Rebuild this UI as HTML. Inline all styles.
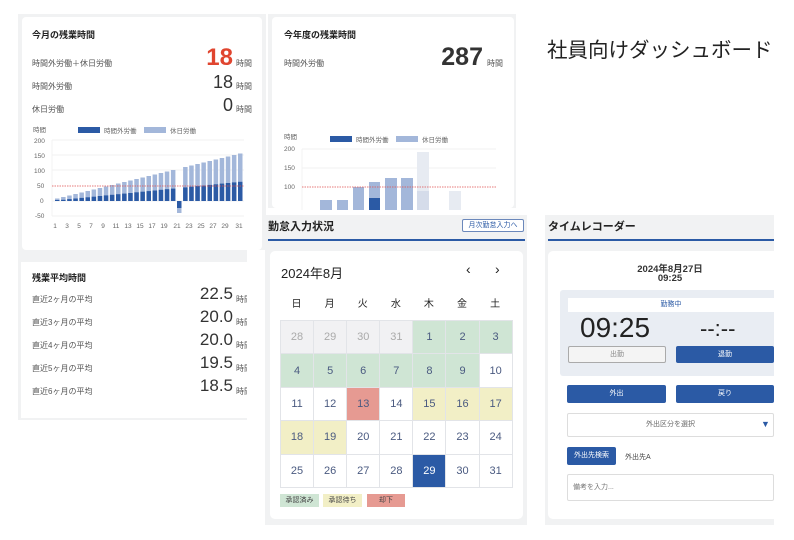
<!DOCTYPE html>
<html><head><meta charset="utf-8"><style>
*{margin:0;padding:0;box-sizing:border-box}
body{width:794px;height:540px;background:#fff;position:relative;overflow:hidden;font-family:"Liberation Sans","Noto Sans CJK JP",sans-serif;color:#333}
.a{position:absolute}
.s{font-size:8px;color:#555;white-space:nowrap}
.n{position:absolute;right:561px;color:#333;text-align:right;white-space:nowrap}
.card{position:absolute;background:#fff}
.g{background:#f1f2f3}
.cal td{width:33.1px;height:33.4px;text-align:center;font-size:11px;color:#4a5a80;border:1px solid #e2e4e8}
.cal{border-collapse:collapse;position:absolute;left:280px;top:320px}
.btn{position:absolute;background:#2b5aa5;color:#fff;font-size:7px;text-align:center;border-radius:2px}
</style></head><body>
<div class="a g" style="left:18px;top:14px;width:248px;height:240px"></div>
<div class="a g" style="left:268px;top:14px;width:248px;height:194px"></div>
<div class="a g" style="left:18px;top:252px;width:232px;height:168px"></div>
<div class="card" style="left:22px;top:17px;width:240px;height:233px;border-radius:4px"></div>
<div class="card" style="left:272px;top:17px;width:242px;height:191px;border-radius:4px"></div>
<div class="card" style="left:21px;top:262px;width:226px;height:156px"></div>

<div class="a" style="left:32px;top:28px;font-size:9px;color:#222;font-weight:bold">今月の残業時間</div>
<div class="a s" style="left:32px;top:58px">時間外労働＋休日労働</div>
<div class="n" style="top:44px;font-size:24px;color:#e0452f;font-weight:bold">18</div>
<div class="a s" style="left:236px;top:58px">時間</div>
<div class="a s" style="left:32px;top:81px">時間外労働</div>
<div class="n" style="top:72px;font-size:18px">18</div>
<div class="a s" style="left:236px;top:81px">時間</div>
<div class="a s" style="left:32px;top:104px">休日労働</div>
<div class="n" style="top:95px;font-size:18px">0</div>
<div class="a s" style="left:236px;top:104px">時間</div>

<svg class="a" style="left:0;top:0" width="270" height="250">
<g font-size="6.5" fill="#666" font-family="Liberation Sans, Noto Sans CJK JP, sans-serif">
<text x="33" y="132">時間</text>
<text x="34" y="143">200</text><text x="34" y="158">150</text><text x="34" y="173">100</text><text x="37" y="188">50</text><text x="40" y="203">0</text><text x="35" y="218">-50</text>
</g>
<rect x="78" y="127" width="22" height="6" fill="#2b5aa5"/><text x="104" y="133" font-size="6.5" fill="#666">時間外労働</text>
<rect x="144" y="127" width="22" height="6" fill="#a3b7da"/><text x="170" y="133" font-size="6.5" fill="#666">休日労働</text>
<g stroke="#eee" stroke-width="0.7"><line x1="52" y1="140" x2="244" y2="140"/><line x1="52" y1="155" x2="244" y2="155"/><line x1="52" y1="170" x2="244" y2="170"/><line x1="52" y1="201" x2="244" y2="201"/><line x1="52" y1="216" x2="244" y2="216"/><line x1="52" y1="140" x2="52" y2="216"/></g>
<g fill="#a3b7da">
<rect x="55" y="198.5" width="4.5" height="2.5"/><rect x="61.1" y="197" width="4.5" height="4"/><rect x="67.2" y="195.5" width="4.5" height="5.5"/><rect x="73.3" y="194" width="4.5" height="7"/><rect x="79.4" y="192.5" width="4.5" height="8.5"/><rect x="85.5" y="191" width="4.5" height="10"/><rect x="91.6" y="189.5" width="4.5" height="11.5"/><rect x="97.7" y="188" width="4.5" height="13"/><rect x="103.8" y="186.5" width="4.5" height="14.5"/><rect x="109.9" y="185" width="4.5" height="16"/><rect x="116" y="183.5" width="4.5" height="17.5"/><rect x="122.1" y="182" width="4.5" height="19"/><rect x="128.2" y="180.5" width="4.5" height="20.5"/><rect x="134.3" y="179" width="4.5" height="22"/><rect x="140.4" y="177.5" width="4.5" height="23.5"/><rect x="146.5" y="176" width="4.5" height="25"/><rect x="152.6" y="174.5" width="4.5" height="26.5"/><rect x="158.7" y="173" width="4.5" height="28"/><rect x="164.8" y="171.5" width="4.5" height="29.5"/><rect x="170.9" y="170" width="4.5" height="31"/>
<rect x="177" y="208" width="4.5" height="5"/>
<rect x="183.1" y="167" width="4.5" height="34"/><rect x="189.2" y="165.5" width="4.5" height="35.5"/><rect x="195.3" y="164" width="4.5" height="37"/><rect x="201.4" y="162.5" width="4.5" height="38.5"/><rect x="207.5" y="161" width="4.5" height="40"/><rect x="213.6" y="159.5" width="4.5" height="41.5"/><rect x="219.7" y="158" width="4.5" height="43"/><rect x="225.8" y="156.5" width="4.5" height="44.5"/><rect x="231.9" y="155" width="4.5" height="46"/><rect x="238" y="153.5" width="4.5" height="47.5"/>
</g>
<g fill="#2b5aa5">
<rect x="55" y="200" width="4.5" height="1"/><rect x="61.1" y="199.8" width="4.5" height="1.2"/><rect x="67.2" y="199.1" width="4.5" height="1.9"/><rect x="73.3" y="198.5" width="4.5" height="2.5"/><rect x="79.4" y="197.9" width="4.5" height="3.1"/><rect x="85.5" y="197.3" width="4.5" height="3.7"/><rect x="91.6" y="196.7" width="4.5" height="4.3"/><rect x="97.7" y="196" width="4.5" height="5"/><rect x="103.8" y="195.4" width="4.5" height="5.6"/><rect x="109.9" y="194.8" width="4.5" height="6.2"/><rect x="116" y="194.2" width="4.5" height="6.8"/><rect x="122.1" y="193.6" width="4.5" height="7.4"/><rect x="128.2" y="193" width="4.5" height="8"/><rect x="134.3" y="192.3" width="4.5" height="8.7"/><rect x="140.4" y="191.7" width="4.5" height="9.3"/><rect x="146.5" y="191.1" width="4.5" height="9.9"/><rect x="152.6" y="190.5" width="4.5" height="10.5"/><rect x="158.7" y="189.8" width="4.5" height="11.2"/><rect x="164.8" y="189.2" width="4.5" height="11.8"/><rect x="170.9" y="188.6" width="4.5" height="12.4"/>
<rect x="177" y="201" width="4.5" height="7"/>
<rect x="183.1" y="187.4" width="4.5" height="13.6"/><rect x="189.2" y="186.7" width="4.5" height="14.3"/><rect x="195.3" y="186.1" width="4.5" height="14.9"/><rect x="201.4" y="185.5" width="4.5" height="15.5"/><rect x="207.5" y="184.9" width="4.5" height="16.1"/><rect x="213.6" y="184.3" width="4.5" height="16.7"/><rect x="219.7" y="183.6" width="4.5" height="17.4"/><rect x="225.8" y="183" width="4.5" height="18"/><rect x="231.9" y="182.4" width="4.5" height="18.6"/><rect x="238" y="181.8" width="4.5" height="19.2"/>
</g>
<line x1="52" y1="186" x2="244" y2="186" stroke="#e05050" stroke-width="0.7" stroke-dasharray="1.5,1"/>
<g font-size="6.5" fill="#666" text-anchor="middle">
<text x="55" y="228">1</text><text x="67" y="228">3</text><text x="79" y="228">5</text><text x="91" y="228">7</text><text x="103" y="228">9</text><text x="116" y="228">11</text><text x="128" y="228">13</text><text x="140" y="228">15</text><text x="152" y="228">17</text><text x="164" y="228">19</text><text x="177" y="228">21</text><text x="189" y="228">23</text><text x="201" y="228">25</text><text x="213" y="228">27</text><text x="225" y="228">29</text><text x="239" y="228">31</text>
</g>
</svg>

<div class="a" style="left:284px;top:28px;font-size:9px;color:#222;font-weight:bold">今年度の残業時間</div>
<div class="a s" style="left:284px;top:58px">時間外労働</div>
<div class="a" style="right:311px;top:43px;font-size:25px;color:#333;font-weight:bold">287</div>
<div class="a s" style="left:487px;top:58px">時間</div>
<svg class="a" style="left:260px;top:0" width="260" height="210">
<g font-size="6.5" fill="#666"><text x="24" y="139">時間</text><text x="24" y="151">200</text><text x="24" y="170">150</text><text x="24" y="189">100</text></g>
<rect x="70" y="136" width="22" height="6" fill="#2b5aa5"/><text x="96" y="142" font-size="6.5" fill="#666">時間外労働</text>
<rect x="136" y="136" width="22" height="6" fill="#a3b7da"/><text x="162" y="142" font-size="6.5" fill="#666">休日労働</text>
<g stroke="#eee" stroke-width="0.7"><line x1="42" y1="149" x2="236" y2="149"/><line x1="42" y1="168" x2="236" y2="168"/><line x1="42" y1="149" x2="42" y2="210"/></g>
<g fill="#a3b7da"><rect x="60" y="200" width="12" height="10"/><rect x="77" y="200" width="11" height="10"/><rect x="93" y="187" width="11" height="23"/><rect x="109" y="182" width="11" height="28"/><rect x="125" y="178" width="12" height="32"/><rect x="141" y="178" width="12" height="32"/></g>
<rect x="109" y="198" width="11" height="12" fill="#2b5aa5"/>
<rect x="157" y="152" width="12" height="58" fill="#e7ebf2"/><rect x="157" y="191" width="12" height="19" fill="#d5dcea"/>
<rect x="189" y="191" width="12" height="19" fill="#e7ebf2"/>
<line x1="42" y1="187" x2="236" y2="187" stroke="#e05050" stroke-width="0.7" stroke-dasharray="1.5,1"/>
</svg>

<div class="a" style="left:32px;top:271px;font-size:9px;color:#222;font-weight:bold">残業平均時間</div>
<div class="a s" style="left:32px;top:294px">直近2ヶ月の平均</div><div class="n" style="top:284px;font-size:17px">22.5</div><div class="a s" style="left:236px;top:294px">時間</div>
<div class="a s" style="left:32px;top:317px">直近3ヶ月の平均</div><div class="n" style="top:307px;font-size:17px">20.0</div><div class="a s" style="left:236px;top:317px">時間</div>
<div class="a s" style="left:32px;top:340px">直近4ヶ月の平均</div><div class="n" style="top:330px;font-size:17px">20.0</div><div class="a s" style="left:236px;top:340px">時間</div>
<div class="a s" style="left:32px;top:363px">直近5ヶ月の平均</div><div class="n" style="top:353px;font-size:17px">19.5</div><div class="a s" style="left:236px;top:363px">時間</div>
<div class="a s" style="left:32px;top:386px">直近6ヶ月の平均</div><div class="n" style="top:376px;font-size:17px">18.5</div><div class="a s" style="left:236px;top:386px">時間</div>
<div class="a" style="left:247px;top:250px;width:22px;height:175px;background:#fff"></div>

<div class="a" style="left:547px;top:33px;font-size:20.5px;color:#222;white-space:nowrap">社員向けダッシュボード</div>

<div class="a g" style="left:265px;top:215px;width:262px;height:310px"></div>
<div class="a" style="left:268px;top:218px;font-size:11px;font-weight:bold;color:#222">勤怠入力状況</div>
<div class="a" style="left:462px;top:219px;width:62px;height:13px;border:1px solid #6b88bb;border-radius:2px;background:#fff;font-size:7px;color:#2b5aa5;text-align:center;line-height:11px">月次勤怠入力へ</div>
<div class="a" style="left:268px;top:239px;width:257px;height:2px;background:#2b5aa5"></div>
<div class="card" style="left:270px;top:251px;width:253px;height:268px;border-radius:5px"></div>
<div class="a" style="left:281px;top:263px;font-size:13px;color:#222">2024年8月</div>
<div class="a" style="left:466px;top:261px;font-size:14px;color:#222">‹</div>
<div class="a" style="left:495px;top:261px;font-size:14px;color:#222">›</div>
<div class="a" style="left:280px;top:295px;width:232px;display:flex;font-size:10px;color:#222">
<span style="width:33.1px;text-align:center">日</span><span style="width:33.1px;text-align:center">月</span><span style="width:33.1px;text-align:center">火</span><span style="width:33.1px;text-align:center">水</span><span style="width:33.1px;text-align:center">木</span><span style="width:33.1px;text-align:center">金</span><span style="width:33.1px;text-align:center">土</span></div>
<table class="cal">
<tr><td style="background:#f1f1f3;color:#aaa">28</td><td style="background:#f1f1f3;color:#aaa">29</td><td style="background:#f1f1f3;color:#aaa">30</td><td style="background:#f1f1f3;color:#aaa">31</td><td style="background:#cfe5d4">1</td><td style="background:#cfe5d4">2</td><td style="background:#cfe5d4">3</td></tr>
<tr><td style="background:#cfe5d4">4</td><td style="background:#cfe5d4">5</td><td style="background:#cfe5d4">6</td><td style="background:#cfe5d4">7</td><td style="background:#cfe5d4">8</td><td style="background:#cfe5d4">9</td><td>10</td></tr>
<tr><td>11</td><td>12</td><td style="background:#e69a92">13</td><td>14</td><td style="background:#f2efc6">15</td><td style="background:#f2efc6">16</td><td style="background:#f2efc6">17</td></tr>
<tr><td style="background:#f2efc6">18</td><td style="background:#f2efc6">19</td><td>20</td><td>21</td><td>22</td><td>23</td><td>24</td></tr>
<tr><td>25</td><td>26</td><td>27</td><td>28</td><td style="background:#2b5aa5;color:#fff">29</td><td>30</td><td>31</td></tr>
</table>
<div class="a" style="left:280px;top:494px;width:39px;height:13px;background:#cfe5d4;font-size:7px;color:#444;text-align:center;line-height:13px">承認済み</div>
<div class="a" style="left:323px;top:494px;width:39px;height:13px;background:#f2efc6;font-size:7px;color:#444;text-align:center;line-height:13px">承認待ち</div>
<div class="a" style="left:367px;top:494px;width:38px;height:13px;background:#e69a92;font-size:7px;color:#444;text-align:center;line-height:13px">却下</div>

<div class="a g" style="left:545px;top:215px;width:229px;height:310px"></div>
<div class="a" style="left:548px;top:218px;font-size:11px;font-weight:bold;color:#222">タイムレコーダー</div>
<div class="a" style="left:548px;top:239px;width:226px;height:2px;background:#2b5aa5"></div>
<div class="card" style="left:548px;top:251px;width:226px;height:268px;border-radius:5px 0 0 5px"></div>
<div class="a" style="left:600px;top:265px;width:140px;text-align:center;font-size:9.5px;font-weight:bold;color:#333;line-height:9px">2024年8月27日<br>09:25</div>
<div class="a" style="left:560px;top:290px;width:214px;height:86px;background:#e9edf3;border-radius:3px 0 0 3px"></div>
<div class="a" style="left:568px;top:298px;width:206px;height:14px;background:#fff;font-size:7px;color:#2b5aa5;text-align:center;line-height:14px">勤務中</div>
<div class="a" style="left:580px;top:312px;font-size:28px;color:#222">09:25</div>
<div class="a" style="left:700px;top:316px;font-size:22px;color:#222">--:--</div>
<div class="a" style="left:568px;top:346px;width:98px;height:17px;border:1px solid #aaa;border-radius:2px;background:#f4f4f4;font-size:7px;color:#888;text-align:center;line-height:15px">出勤</div>
<div class="btn" style="left:676px;top:346px;width:98px;height:17px;line-height:17px">退勤</div>
<div class="btn" style="left:567px;top:385px;width:99px;height:18px;line-height:18px">外出</div>
<div class="btn" style="left:676px;top:385px;width:98px;height:18px;line-height:18px">戻り</div>
<div class="a" style="left:567px;top:413px;width:207px;height:24px;border:1px solid #ddd;border-radius:2px;font-size:7px;color:#666;text-align:center;line-height:22px">外出区分を選択</div>
<div class="a" style="left:761px;top:419px;font-size:9px;color:#2b5aa5">▼</div>
<div class="btn" style="left:567px;top:447px;width:49px;height:18px;line-height:18px">外出先検索</div>
<div class="a" style="left:625px;top:452px;font-size:7px;color:#444">外出先A</div>
<div class="a" style="left:567px;top:474px;width:207px;height:27px;border:1px solid #ddd;border-radius:2px;font-size:7px;color:#777;line-height:25px;padding-left:5px">備考を入力...</div>
</body></html>
